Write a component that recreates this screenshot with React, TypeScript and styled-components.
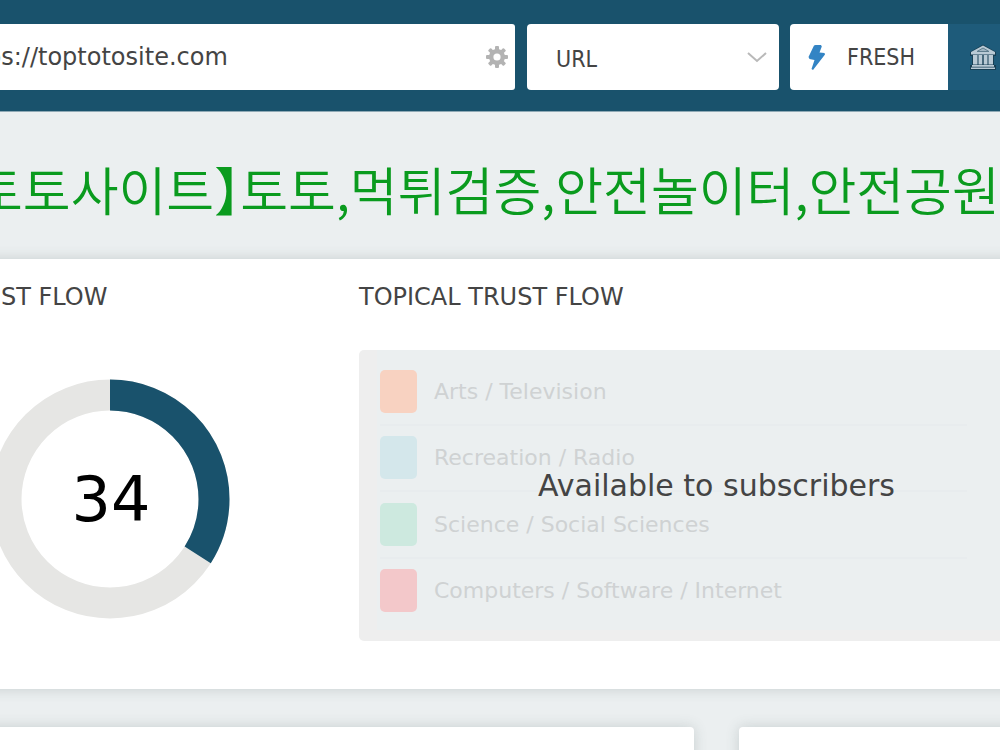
import React from "react";
import styled, { createGlobalStyle } from "styled-components";

const GlobalStyle = createGlobalStyle`
  *, *::before, *::after { box-sizing: border-box; }
  body {
    margin: 0;
    background: #ebeff0;
    color: #444;
    font-family: "DejaVu Sans", Verdana, sans-serif;
    overflow: hidden;
  }
  h1, h2, p, ul { margin: 0; padding: 0; font-weight: 400; }
`;

const Viewport = styled.div`
  height: 100vh;
  overflow: hidden;
`;

/* The page is wider than the window on both sides. */
const Page = styled.div`
  margin: 0 -100px 0 -70px;
`;

const Toolbar = styled.form`
  display: flex;
  height: 112px;
  padding: 24px 0 21px;
  background: #19526c;
  border-bottom: 1px solid #8fa9b5;
  font-family: "DejaVu Sans Condensed", Tahoma, sans-serif;
`;

const SearchBox = styled.div`
  flex: 1;
  min-width: 0;
  display: flex;
  align-items: center;
  padding: 0 7px 0 22px;
  background: #fff;
  border-radius: 3px;
`;

const SearchInput = styled.input`
  flex: 1;
  min-width: 0;
  border: 0;
  padding: 0;
  outline: 0;
  background: none;
  color: #444;
  font-family: "DejaVu Sans", Verdana, sans-serif;
  font-size: 24px;
`;

const IconButton = styled.button`
  display: flex;
  padding: 0;
  border: 0;
  background: none;
  color: #b3b3b3;
`;

const SelectBox = styled.div`
  position: relative;
  width: 252px;
  margin: 0 11px 0 12px;
`;

const Select = styled.select`
  appearance: none;
  width: 100%;
  height: 100%;
  padding: 4px 29px 0;
  border: 0;
  border-radius: 4px;
  background: #fff;
  color: #444;
  font-family: inherit;
  font-size: 23px;
`;

const Chevron = styled.svg`
  position: absolute;
  right: 12px;
  top: 27px;
  pointer-events: none;
`;

const IndexButton = styled.button<{ $active?: boolean }>`
  display: flex;
  align-items: center;
  gap: 18px;
  width: ${(p) => (p.$active ? 158 : 152)}px;
  padding: 0 0 0 ${(p) => (p.$active ? 17 : 21)}px;
  border: 0;
  border-radius: ${(p) => (p.$active ? "4px 0 0 4px" : "0 4px 4px 0")};
  background: ${(p) => (p.$active ? "#fff" : "#1e5b7a")};
  color: #444;
  font-family: inherit;
  font-size: 23px;
`;

const Title = styled.h1`
  padding: 39px 0 32px 19px;
  color: #0a9b1e;
  font-family: "Noto Sans CJK KR", sans-serif;
  font-size: 52px;
  font-weight: 350;
  line-height: 76px;
  white-space: nowrap;
  font-feature-settings: "halt";
`;

const Card = styled.section`
  background: #fff;
  border-radius: 4px;
  box-shadow: 0 0 14px rgba(60, 80, 80, 0.2);
`;

const FlowCard = styled(Card)`
  display: grid;
  grid-template-columns: 314px 1fr;
  column-gap: 93px;
  padding: 24px 26px 48px 22px;
`;

const FlowColumn = styled.div`
  display: flex;
  flex-direction: column;
`;

const Heading = styled.h2`
  height: 67px;
  font-size: 24px;
  line-height: 28px;
  white-space: nowrap;
`;

const Gauge = styled.div`
  display: grid;
  place-items: center;
  padding: 29px 0 0 2px;
  > * { grid-area: 1 / 1; }
`;

const Score = styled.p`
  padding: 2px 0 0 2px;
  color: #000;
  font-size: 62px;
  line-height: 76px;
`;

const Locked = styled.div`
  display: grid;
  height: 291px;
  padding: 0 0 11px 18px;
  background: #eee;
  border-radius: 5px;
  overflow: hidden;
  > * { grid-area: 1 / 1; }
`;

const Topics = styled.ul`
  display: grid;
  grid-auto-rows: 1fr;
  padding: 9px 107px 5px 3px;
  background: #ebeff0;
  list-style: none;
`;

const Topic = styled.li`
  display: flex;
  align-items: center;
  gap: 17px;
  border-bottom: 2px solid #e8ecee;
  color: #cfd2d3;
  font-size: 22px;
  white-space: nowrap;
  &:last-child { border-color: transparent; }
`;

const Swatch = styled.span<{ $color: string }>`
  width: 37px;
  height: 43px;
  border-radius: 5px;
  background: ${(p) => p.$color};
`;

const Notice = styled.p`
  z-index: 1;
  place-self: center;
  padding: 0 18px 8px 0;
  font-size: 30px;
  line-height: 36px;
  white-space: nowrap;
`;

const LowerRow = styled.div`
  display: flex;
  gap: 45px;
  margin-top: 38px;
`;

const LowerCard = styled(Card)<{ $wide?: boolean }>`
  flex: ${(p) => (p.$wide ? "0 0 764px" : "1")};
  height: 300px;
`;

const topics = [
  { name: "Arts / Television", color: "#f8d2c1" },
  { name: "Recreation / Radio", color: "#d4e7eb" },
  { name: "Science / Social Sciences", color: "#cde9df" },
  { name: "Computers / Software / Internet", color: "#f3c8ca" },
];

const GearIcon = () => (
  <svg width="22" height="22" viewBox="0 0 22 22" aria-hidden="true">
    <g fill="currentColor">
      {[0, 45, 90, 135].map((a) => (
        <rect key={a} x="9" y="0" width="4" height="22" rx="1" transform={`rotate(${a} 11 11)`} />
      ))}
      <circle cx="11" cy="11" r="8" />
    </g>
    <circle cx="11" cy="11" r="3.6" fill="#fff" />
  </svg>
);

const BoltIcon = () => (
  <svg width="22" height="28" viewBox="0 0 22 28" aria-hidden="true">
    <path d="M7 2.500L8.500 2L14 2L14.800 3.500L12.500 9.500L17.500 10L18 11.500L6 27L4.500 26L7.500 17L2.500 16L1.500 14Z" fill="#3384c4" />
  </svg>
);

const MuseumIcon = () => (
  <svg width="28" height="28" viewBox="0 0 28 28" aria-hidden="true">
    <path d="M14 1.500L27 9V13H25V22H27V27H1V22H3V13H1V9Z" fill="#173f54" />
    <path
      d="M14 2.500L26 9V11.500H2V9ZM4 12H8.500V21.500H4ZM9.500 12H13.300V21.500H9.500ZM14.700 12H18.500V21.500H14.700ZM19.500 12H24V21.500H19.500ZM3 22H25V23.800H3ZM2 24.500H26V26H2Z"
      fill="#b9cad5"
    />
    <path d="M14 5L20 8.500H8Z" fill="#9fb4c1" stroke="#5f7d8d" />
  </svg>
);

const RADIUS = 104;
const CIRCUMFERENCE = 2 * Math.PI * RADIUS;

const Donut = ({ value }: { value: number }) => (
  <svg width="240" height="240" viewBox="0 0 240 240" aria-hidden="true">
    <g fill="none" strokeWidth="31" transform="rotate(-90 120 120)">
      <circle cx="120" cy="120" r={RADIUS} stroke="#e6e6e4" />
      <circle
        cx="120"
        cy="120"
        r={RADIUS}
        stroke="#19526c"
        strokeDasharray={`${(CIRCUMFERENCE * value) / 100} ${CIRCUMFERENCE}`}
      />
    </g>
  </svg>
);

export default function App() {
  return (
    <Viewport>
      <GlobalStyle />
      <Page>
        <Toolbar>
          <SearchBox>
            <SearchInput aria-label="Address" defaultValue="https://toptotosite.com" />
            <IconButton type="button" aria-label="Settings">
              <GearIcon />
            </IconButton>
          </SearchBox>
          <SelectBox>
            <Select aria-label="Scope" defaultValue="URL">
              <option>URL</option>
            </Select>
            <Chevron width="20" height="13" viewBox="0 0 20 13" aria-hidden="true">
              <path d="M1 2L10 10L19 2" fill="none" stroke="#b9b9b9" strokeWidth="2" />
            </Chevron>
          </SelectBox>
          <IndexButton type="button" $active>
            <BoltIcon />
            FRESH
          </IndexButton>
          <IndexButton type="button" aria-label="Archive">
            <MuseumIcon />
          </IndexButton>
        </Toolbar>
        <Title>【토토사이트】토토,먹튀검증,안전놀이터,안전공원</Title>
        <FlowCard>
          <FlowColumn>
            <Heading>TRUST FLOW</Heading>
            <Gauge>
              <Donut value={34} />
              <Score>34</Score>
            </Gauge>
          </FlowColumn>
          <FlowColumn>
            <Heading>TOPICAL TRUST FLOW</Heading>
            <Locked>
              <Topics>
                {topics.map((t) => (
                  <Topic key={t.name}>
                    <Swatch $color={t.color} />
                    {t.name}
                  </Topic>
                ))}
              </Topics>
              <Notice>Available to subscribers</Notice>
            </Locked>
          </FlowColumn>
        </FlowCard>
        <LowerRow>
          <LowerCard $wide />
          <LowerCard />
        </LowerRow>
      </Page>
    </Viewport>
  );
}
